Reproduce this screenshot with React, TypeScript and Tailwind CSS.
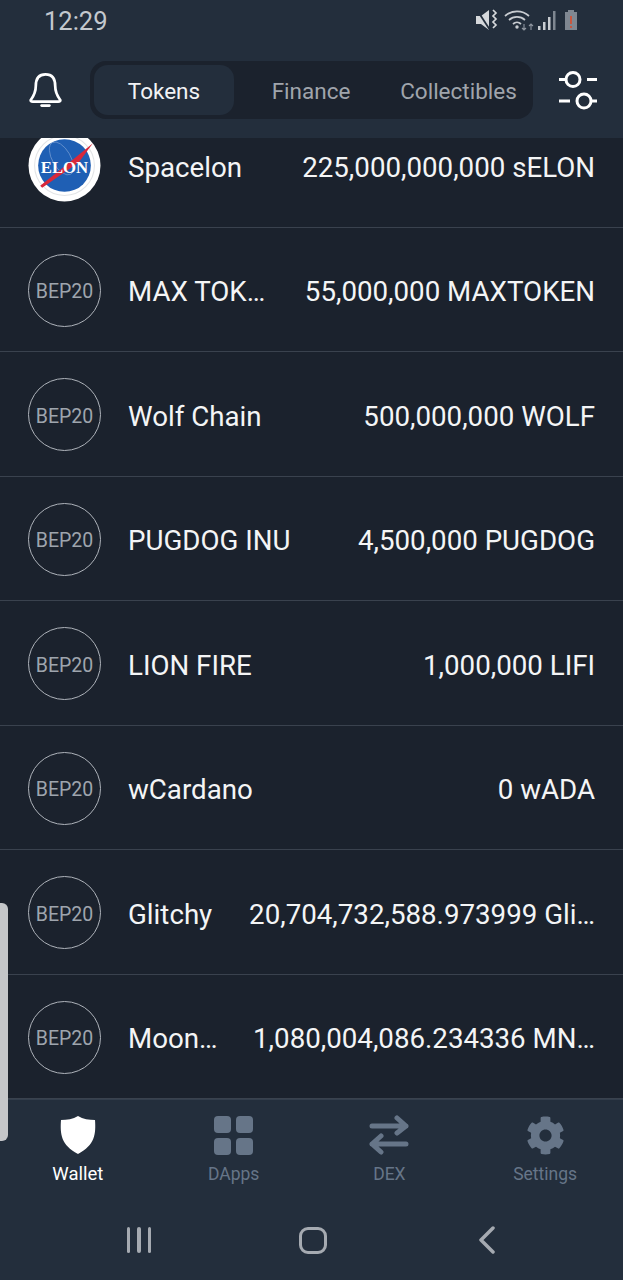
import { FaCog } from "react-icons/fa";

const tokens = [
  { name: "MAX TOK…", amount: "55,000,000 MAXTOKEN" },
  { name: "Wolf Chain", amount: "500,000,000 WOLF" },
  { name: "PUGDOG INU", amount: "4,500,000 PUGDOG" },
  { name: "LION FIRE", amount: "1,000,000 LIFI" },
  { name: "wCardano", amount: "0 wADA" },
  { name: "Glitchy", amount: "20,704,732,588.973999 Gli…" },
  { name: "Moon…", amount: "1,080,004,086.234336 MN…" },
];

const ElonLogo = () => (
  <svg width="73" height="73" viewBox="0 0 72 72" className="shrink-0">
    <circle cx="36" cy="36" r="35.5" fill="#fff" />
    <circle cx="36" cy="36" r="29.5" fill="none" stroke="#e2e4e6" strokeWidth="1" />
    <circle cx="36" cy="36" r="26" fill="#1f5fb4" />
    <ellipse cx="33" cy="29" rx="9" ry="18" fill="none" stroke="#7fa3d6" strokeWidth="0.6" transform="rotate(-30 33 29)" />
    <path d="M64 14 L50 33 L14 58 L12 56 L42 32 Z" fill="#d8283a" />
    <text x="36" y="43" textAnchor="middle" fontFamily="'Liberation Serif', serif" fontWeight="700" fontSize="16.5" fill="#fff">
      ELON
    </text>
  </svg>
);

const Bep20 = () => (
  <div className="flex h-[73px] w-[73px] shrink-0 items-center justify-center rounded-full border border-[#aeb3ba] pt-[3px] text-[19.5px] text-[#9fa5ad]">
    BEP20
  </div>
);

const TokenRow = ({ icon, name, amount }: { icon: React.ReactNode; name: string; amount: string }) => (
  <div className="flex h-[124.5px] items-center justify-between border-b border-[#3a424e] pl-[28px] pr-[28px] pt-[2px]">
    <div className="flex items-center gap-[27px]">
      {icon}
      <span className="block whitespace-nowrap pt-[4px] text-[27.7px] text-[#f4f5f6]">{name}</span>
    </div>
    <span className="block whitespace-nowrap pt-[4px] text-[27.7px] text-[#f4f5f6]">{amount}</span>
  </div>
);

const NavItem = ({ icon, label, active }: { icon: React.ReactNode; label: string; active?: boolean }) => (
  <div className="flex w-[155.75px] flex-col items-center">
    <div className="flex h-[44px] items-center justify-center">{icon}</div>
    <span className={`mt-[5px] leading-[24px] ${active ? "text-[18.5px] text-white" : "text-[17.5px] text-[#667588]"}`}>{label}</span>
  </div>
);

export default function App() {
  return (
    <div className="relative flex h-[1280px] w-[623px] flex-col overflow-hidden bg-[#1b222d] font-['Roboto',sans-serif]">
      {/* status bar + header */}
      <header className="z-10 h-[138px] shrink-0 bg-[#232e3c]">
        <div className="flex h-[42px] items-center justify-between pl-[44px] pr-[42px]">
          <span className="text-[25.5px] text-[#c3c8ce]">12:29</span>
          <svg width="106" height="24" viewBox="0 0 106 24">
            {/* muted speaker */}
            <path d="M1 7 h5 l8-6 v20 l-8-6 h-5 Z" fill="#d5d8db" />
            <path d="M2 1 L15 21" stroke="#232e3c" strokeWidth="1.8" />
            <path d="M18 1 l3 3 l-3 3 l3 3 l-3 3 l3 3 l-3 3" fill="none" stroke="#d5d8db" strokeWidth="1.7" />
            {/* wifi */}
            <path d="M30 7 a18 18 0 0 1 24 0 M34 11 a12 12 0 0 1 16 0 M38 15 a6 6 0 0 1 8 0" fill="none" stroke="#c8ccd1" strokeWidth="1.7" />
            <circle cx="42" cy="18" r="1.7" fill="#c8ccd1" />
            <path d="M49 15 v6 M47 19 l2 2 l2-2 M56 21 v-6 M54 17 l2-2 l2 2" fill="none" stroke="#8f96a0" strokeWidth="1.1" />
            {/* signal */}
            <rect x="63" y="17" width="2.5" height="4" fill="#c8ccd1" />
            <rect x="68" y="13" width="2.5" height="8" fill="#c8ccd1" />
            <rect x="73" y="8" width="2.5" height="13" fill="#c8ccd1" />
            <rect x="78" y="2" width="2.5" height="19" fill="#7f8791" />
            {/* battery */}
            <path d="M90 3 h3 v-2 h6 v2 h3 v18 h-12 Z" fill="#7f8791" />
            <rect x="95" y="7" width="2" height="8" fill="#c9573f" />
            <rect x="95" y="17" width="2" height="2" fill="#c9573f" />
          </svg>
        </div>
        <div className="mt-[19px] flex items-center">
          <div className="flex w-[90px] justify-center">
            <svg width="33" height="36" viewBox="0 0 34 36" fill="none" stroke="#fff" strokeWidth="2.8" strokeLinejoin="round">
              <path d="M17 2 C9 2 7 8 7 14 C7 21 5 24 2 28 Q1 30 4 30 H30 Q33 30 32 28 C29 24 27 21 27 14 C27 8 25 2 17 2 Z" />
              <path d="M13 34 h8" strokeLinecap="round" />
            </svg>
          </div>
          <div className="flex h-[58px] w-[443px] rounded-[16px] bg-[#1b222d] p-[4px] text-[22.5px]">
            <div className="flex w-[140px] items-center justify-center rounded-[14px] bg-[#232e3c] pt-[4px] text-[#f2f3f5]">Tokens</div>
            <div className="flex w-[154px] items-center justify-center pt-[4px] text-[#a0a5ac]">Finance</div>
            <div className="flex w-[141px] items-center justify-center whitespace-nowrap pt-[4px] text-[#a0a5ac]">Collectibles</div>
          </div>
          <div className="flex flex-1 justify-center">
            <svg width="38" height="39" viewBox="0 0 38 39" fill="none" stroke="#fff" strokeWidth="3">
              <circle cx="14" cy="8.5" r="7" />
              <circle cx="25" cy="30" r="7" />
              <path d="M0 8.5 h7 M28 8.5 h10 M0 30 h11 M32 30 h6" />
            </svg>
          </div>
        </div>
      </header>

      {/* token list, scrolled so the first row is cut off */}
      <main className="min-h-0 flex-1 overflow-hidden">
        <div className="-mt-[35px]">
          <TokenRow icon={<ElonLogo />} name="Spacelon" amount="225,000,000,000 sELON" />
          {tokens.map((t) => (
            <TokenRow key={t.name} icon={<Bep20 />} name={t.name} amount={t.amount} />
          ))}
        </div>
      </main>

      {/* bottom nav */}
      <footer className="z-10 h-[181px] shrink-0 border-t border-[#333e4c] bg-[#232e3c]">
        <div className="flex pt-[13px]">
          <NavItem
            active
            label="Wallet"
            icon={
              <svg width="36" height="38" viewBox="0 0 36 38">
                <path d="M18 0 C23 3 29 4 35 4 C36 18 35 29 18 38 C1 29 0 18 1 4 C7 4 13 3 18 0 Z" fill="#fff" />
              </svg>
            }
          />
          <NavItem
            label="DApps"
            icon={
              <div className="grid grid-cols-2 gap-[5px]">
                <div className="h-[17px] w-[17px] rounded-[4px] bg-[#667588]" />
                <div className="h-[17px] w-[17px] rounded-[4px] bg-[#667588]" />
                <div className="h-[17px] w-[17px] rounded-[4px] bg-[#667588]" />
                <div className="h-[17px] w-[17px] rounded-[4px] bg-[#667588]" />
              </div>
            }
          />
          <NavItem
            label="DEX"
            icon={
              <svg width="40" height="40" viewBox="0 0 40 40" fill="none" stroke="#667588" strokeWidth="5" strokeLinecap="round" strokeLinejoin="round">
                <path d="M3 11 H37 M28 3 L37 11 L28 18" />
                <path d="M37 29 H3 M12 21 L3 29 L12 37" />
              </svg>
            }
          />
          <NavItem label="Settings" icon={<FaCog size={39} color="#667588" />} />
        </div>
        <div className="mt-[40px] flex items-center">
          <div className="flex w-[151px] justify-end gap-[7px]">
            <div className="h-[26px] w-[3.5px] rounded-full bg-[#a5aab1]" />
            <div className="h-[26px] w-[3.5px] rounded-full bg-[#a5aab1]" />
            <div className="h-[26px] w-[3.5px] rounded-full bg-[#a5aab1]" />
          </div>
          <div className="ml-[148px] h-[27px] w-[28px] rounded-[9px] border-[3.5px] border-[#a5aab1]" />
          <svg width="20" height="28" viewBox="0 0 20 28" fill="none" stroke="#a5aab1" strokeWidth="3.5" strokeLinecap="round" strokeLinejoin="round" className="ml-[150px]">
            <path d="M16 2 L4 14 L16 26" />
          </svg>
        </div>
      </footer>

      {/* edge panel handle */}
      <div className="absolute left-0 top-[903px] z-20 h-[238px] w-[8px] rounded-r-[6px] bg-[#c4c6c9]" />
    </div>
  );
}
